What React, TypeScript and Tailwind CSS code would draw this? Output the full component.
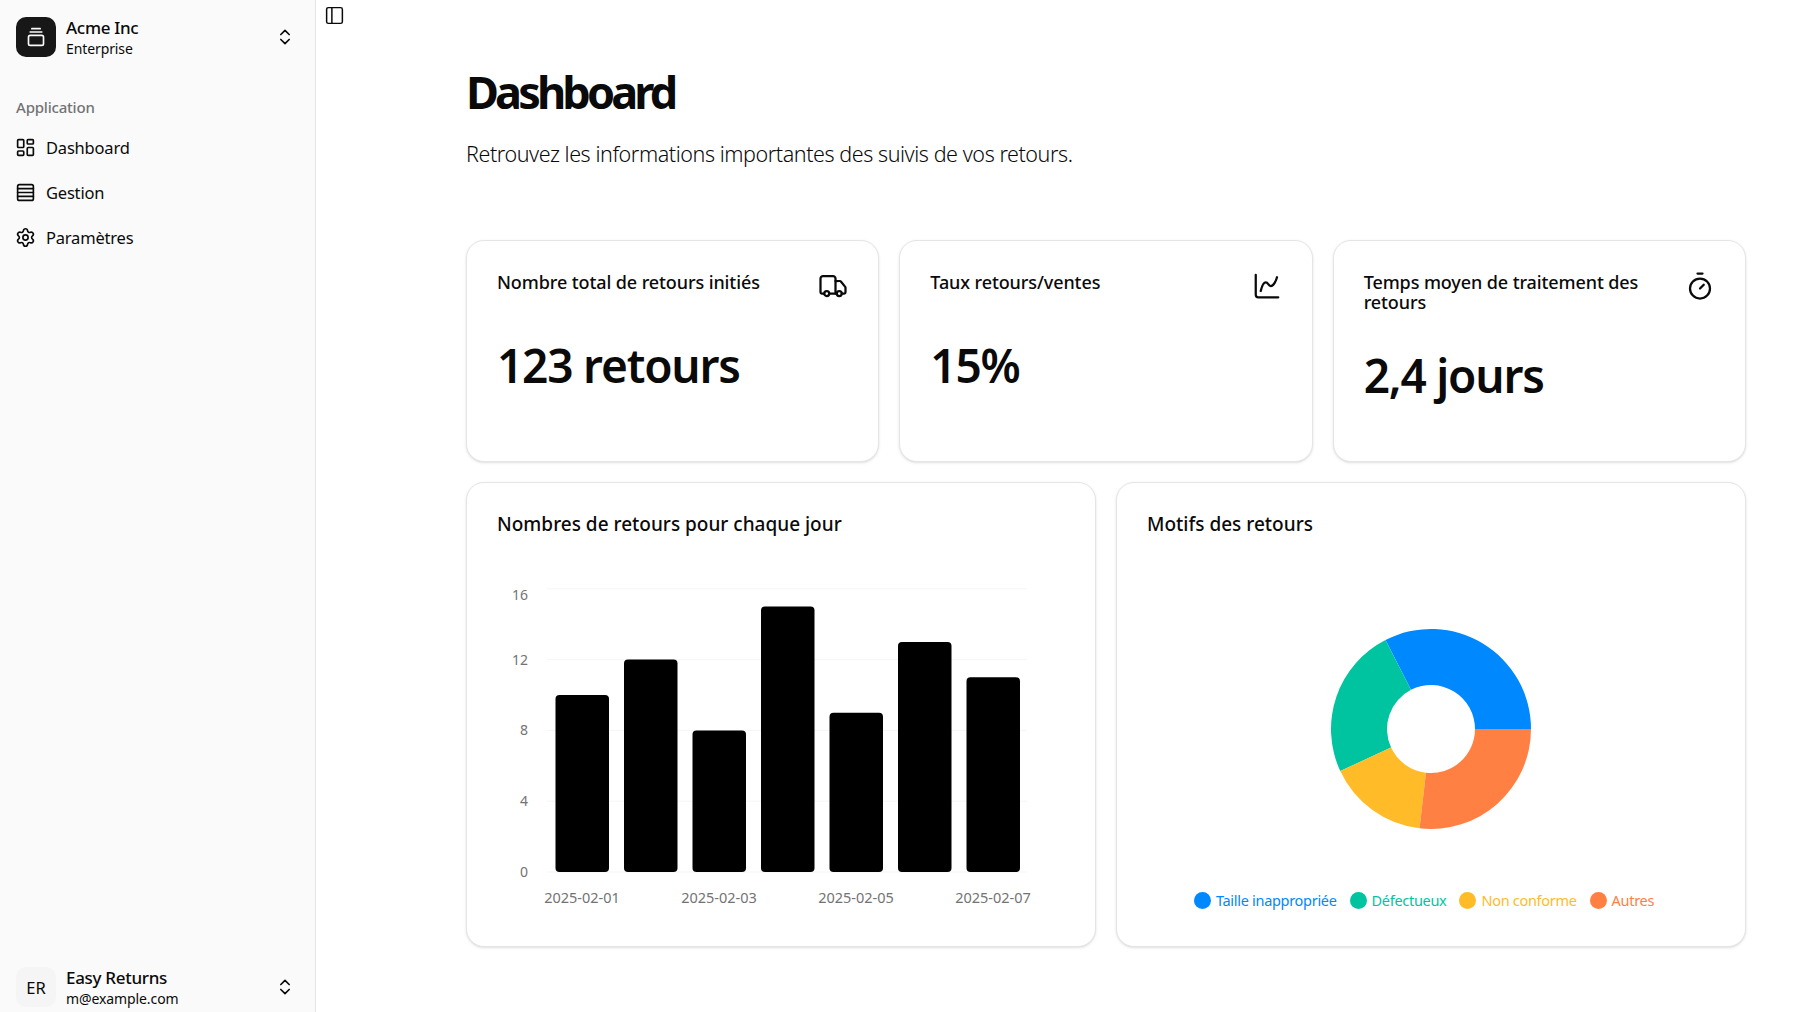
import React from 'react';
import {
  ChartSpline,
  ChevronsUpDown,
  GalleryVerticalEnd,
  LayoutDashboard,
  PanelLeft,
  Rows4,
  Settings,
  Timer,
  Truck,
} from 'lucide-react';

const navItems = [
  { label: 'Dashboard', icon: LayoutDashboard },
  { label: 'Gestion', icon: Rows4 },
  { label: 'Paramètres', icon: Settings },
];

const stats = [
  { title: 'Nombre total de retours initiés', value: '123 retours', icon: Truck },
  { title: 'Taux retours/ventes', value: '15%', icon: ChartSpline },
  { title: 'Temps moyen de traitement des retours', value: '2,4 jours', icon: Timer },
];

const dailyReturns = [
  { date: '2025-02-01', count: 10 },
  { date: '2025-02-02', count: 12 },
  { date: '2025-02-03', count: 8 },
  { date: '2025-02-04', count: 15 },
  { date: '2025-02-05', count: 9 },
  { date: '2025-02-06', count: 13 },
  { date: '2025-02-07', count: 11 },
];

const reasons = [
  { label: 'Taille inappropriée', value: 40, color: '#0088fe', text: 'text-[#0088fe]', dot: 'bg-[#0088fe]' },
  { label: 'Défectueux', value: 30, color: '#00c49f', text: 'text-[#00c49f]', dot: 'bg-[#00c49f]' },
  { label: 'Non conforme', value: 20, color: '#ffbb28', text: 'text-[#ffbb28]', dot: 'bg-[#ffbb28]' },
  { label: 'Autres', value: 33, color: '#ff8042', text: 'text-[#ff8042]', dot: 'bg-[#ff8042]' },
];

function BarChart() {
  const bottom = 302;
  const unit = 17.7;
  return (
    <svg width="560" height="350" className="block">
      {[0, 4, 8, 12, 16].map((tick) => (
        <g key={tick}>
          <line x1="50" x2="530" y1={bottom - tick * unit} y2={bottom - tick * unit} stroke="#f5f5f5" strokeWidth="1" />
          <text
            x="31"
            y={bottom - tick * unit + (tick === 16 ? 11 : 5)}
            textAnchor="end"
            fontSize="14"
            fill="#737373"
          >
            {tick}
          </text>
        </g>
      ))}
      {dailyReturns.map((day, i) => (
        <rect
          key={day.date}
          x={58.5 + i * 68.5}
          y={bottom - day.count * unit}
          width="53.5"
          height={day.count * unit}
          rx="4"
          fill="#000"
        />
      ))}
      {dailyReturns.map((day, i) =>
        i % 2 === 0 ? (
          <text key={day.date} x={85 + i * 68.5} y="333" textAnchor="middle" fontSize="14.5" fill="#737373">
            {day.date}
          </text>
        ) : null,
      )}
    </svg>
  );
}

function DonutChart() {
  const total = reasons.reduce((sum, r) => sum + r.value, 0);
  const outer = 100;
  const inner = 44;
  let angle = 0;
  const point = (r: number, a: number) => {
    const rad = (a * Math.PI) / 180;
    return `${100 + r * Math.cos(rad)} ${100 - r * Math.sin(rad)}`;
  };
  return (
    <svg width="200" height="200" className="block">
      {reasons.map((r) => {
        const start = angle;
        const end = angle + (r.value / total) * 360;
        angle = end;
        const large = end - start > 180 ? 1 : 0;
        const d = `M${point(outer, start)} A${outer} ${outer} 0 ${large} 0 ${point(outer, end)} L${point(inner, end)} A${inner} ${inner} 0 ${large} 1 ${point(inner, start)} Z`;
        return <path key={r.label} d={d} fill={r.color} />;
      })}
    </svg>
  );
}

function UserRow({ children, name, sub }: { children: React.ReactNode; name: string; sub: string }) {
  return (
    <div className="flex h-10 items-center pl-4 pr-[20px]">
      {children}
      <div className="mt-[2px] ml-[10px] flex-1 leading-[21px]">
        <div className="text-[17px] font-medium tracking-[-0.3px] text-[#0a0a0a]">{name}</div>
        <div className="text-[14px] tracking-[-0.1px] text-[#0a0a0a]">{sub}</div>
      </div>
      <ChevronsUpDown size={20} strokeWidth={2} className="text-[#0a0a0a]" />
    </div>
  );
}

export default function App() {
  return (
    <div className="flex h-[1012px] overflow-hidden bg-white font-['Noto_Sans',sans-serif] text-[#0a0a0a]">
      <aside className="flex w-[316px] shrink-0 flex-col border-r border-[#e5e5e5] bg-[#fafafa] pt-[17px] pb-[5px]">
        <UserRow name="Acme Inc" sub="Enterprise">
          <div className="flex h-10 w-10 items-center justify-center rounded-[10px] bg-[#171717] text-[#fafafa]">
            <GalleryVerticalEnd size={20} />
          </div>
        </UserRow>

        <div className="mt-[39px] px-4 text-[15px] font-medium tracking-[-0.2px] text-[#737373]">Application</div>
        <nav className="mt-[15px] flex flex-col gap-[15px] pl-[15px]">
          {navItems.map((item) => (
            <div key={item.label} className="flex h-[30px] items-center gap-[10px]">
              <item.icon size={21} strokeWidth={1.9} className="mb-[3px] shrink-0" />
              <span className="text-[16.5px] tracking-[-0.2px]">{item.label}</span>
            </div>
          ))}
        </nav>

        <div className="mt-auto">
          <UserRow name="Easy Returns" sub="m@example.com">
            <div className="flex h-10 w-10 items-center justify-center rounded-[10px] bg-[#f5f5f5] pt-[2px] text-[16.5px]">ER</div>
          </UserRow>
        </div>
      </aside>

      <main className="min-w-0 flex-1">
        <div className="pt-[5px] pl-[8px]">
          <PanelLeft size={21} strokeWidth={1.7} />
        </div>

        <div className="pt-[36px] pr-[58px] pl-[150px]">
          <h1 className="text-[45px] leading-[60px] font-bold tracking-[-3.85px]">Dashboard</h1>
          <p className="mt-[17px] text-[21.5px] leading-[30px] font-light tracking-[-0.43px]">
            Retrouvez les informations importantes des suivis de vos retours.
          </p>

          <div className="mt-[71px] grid grid-cols-3 gap-5">
            {stats.map((stat) => (
              <div
                key={stat.title}
                className="h-[222px] rounded-[18px] border border-[#e5e5e5] bg-white px-[30px] pt-[31px] shadow-sm"
              >
                <div className="flex min-h-[30px] items-start justify-between gap-8">
                  <div className="text-[18px] leading-5 font-medium tracking-[-0.1px]">{stat.title}</div>
                  <stat.icon size={30} strokeWidth={1.8} className="-mt-[1px] shrink-0" />
                </div>
                <div className="mt-[31px] text-[46px] leading-[64px] font-semibold tracking-[-1.2px]">{stat.value}</div>
              </div>
            ))}
          </div>

          <div className="mt-5 grid grid-cols-2 gap-5">
            <div className="h-[465px] rounded-[18px] border border-[#e5e5e5] bg-white px-[30px] pt-[31px] shadow-sm">
              <div className="text-[19px] leading-5 font-medium">Nombres de retours pour chaque jour</div>
              <div className="mt-[36px]">
                <BarChart />
              </div>
            </div>
            <div className="flex h-[465px] flex-col rounded-[18px] border border-[#e5e5e5] bg-white px-[30px] pt-[31px] shadow-sm">
              <div className="text-[19px] leading-5 font-medium">Motifs des retours</div>
              <div className="mt-[95px] flex justify-center">
                <DonutChart />
              </div>
              <div className="mt-[61px] flex items-center justify-center gap-[13px] pr-[14px] text-[14.5px] tracking-[-0.3px]">
                {reasons.map((r) => (
                  <div key={r.label} className={`flex items-center gap-[5px] ${r.text}`}>
                    <span className={`h-[17px] w-[17px] rounded-full ${r.dot}`} />
                    <span>{r.label}</span>
                  </div>
                ))}
              </div>
            </div>
          </div>
        </div>
      </main>
    </div>
  );
}
